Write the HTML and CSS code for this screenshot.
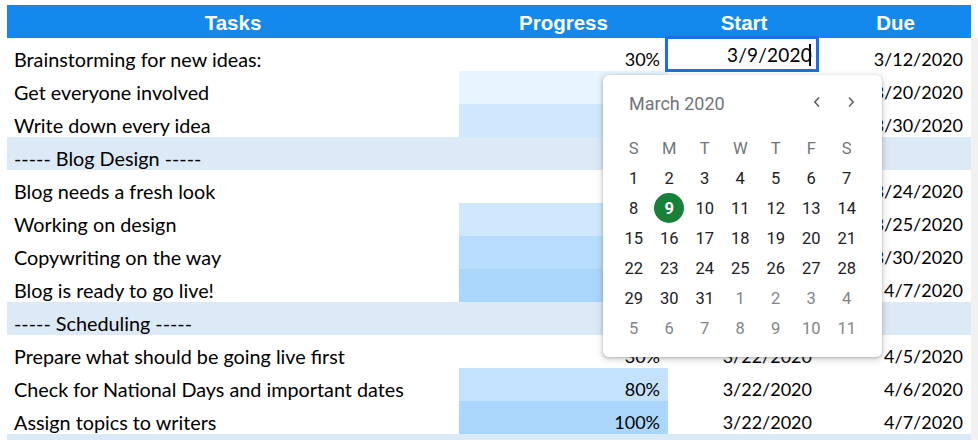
FILE: index.html
```html
<!DOCTYPE html>
<html>
<head>
<meta charset="utf-8">
<link rel="stylesheet" href="styles.css">
</head>
<body>
<div class="sheet">
  <div class="row head">
    <div class="c">Tasks</div>
    <div class="c">Progress</div>
    <div class="c">Start</div>
    <div class="c">Due</div>
  </div>
  <div class="row">
    <div class="c task">Brainstorming for new ideas:</div>
    <div class="c num">30%</div>
    <div class="c num">3/9/2020</div>
    <div class="c num">3/12/2020</div>
  </div>
  <div class="row">
    <div class="c task">Get everyone involved</div>
    <div class="c num p10">10%</div>
    <div class="c num">3/10/2020</div>
    <div class="c num">3/20/2020</div>
  </div>
  <div class="row">
    <div class="c task">Write down every idea</div>
    <div class="c num p40">40%</div>
    <div class="c num">3/12/2020</div>
    <div class="c num">3/30/2020</div>
  </div>
  <div class="row section">
    <div class="c task">----- Blog Design -----</div>
    <div class="c"></div><div class="c"></div><div class="c"></div>
  </div>
  <div class="row">
    <div class="c task">Blog needs a fresh look</div>
    <div class="c num">30%</div>
    <div class="c num">3/15/2020</div>
    <div class="c num">3/24/2020</div>
  </div>
  <div class="row">
    <div class="c task">Working on design</div>
    <div class="c num p40">40%</div>
    <div class="c num">3/16/2020</div>
    <div class="c num">3/25/2020</div>
  </div>
  <div class="row">
    <div class="c task">Copywriting on the way</div>
    <div class="c num p70">70%</div>
    <div class="c num">3/18/2020</div>
    <div class="c num">3/30/2020</div>
  </div>
  <div class="row">
    <div class="c task">Blog is ready to go live!</div>
    <div class="c num p100">100%</div>
    <div class="c num">3/20/2020</div>
    <div class="c num">4/7/2020</div>
  </div>
  <div class="row section">
    <div class="c task">----- Scheduling -----</div>
    <div class="c"></div><div class="c"></div><div class="c"></div>
  </div>
  <div class="row">
    <div class="c task">Prepare what should be going live first</div>
    <div class="c num">30%</div>
    <div class="c num">3/22/2020</div>
    <div class="c num">4/5/2020</div>
  </div>
  <div class="row">
    <div class="c task">Check for National Days and important dates</div>
    <div class="c num p80">80%</div>
    <div class="c num">3/22/2020</div>
    <div class="c num">4/6/2020</div>
  </div>
  <div class="row">
    <div class="c task">Assign topics to writers</div>
    <div class="c num p100">100%</div>
    <div class="c num">3/22/2020</div>
    <div class="c num">4/7/2020</div>
  </div>
  <div class="row section last">
    <div class="c task"></div>
    <div class="c"></div><div class="c"></div><div class="c"></div>
  </div>

  <div class="editor"><span class="edit-text">3/9/2020</span><span class="caret"></span></div>

  <div class="picker">
    <div class="picker-head">
      <span class="month">March 2020</span>
      <span class="navs">
        <svg width="10" height="12" viewBox="0 0 10 12"><path d="M7 1.5 L2.8 6 L7 10.5" fill="none" stroke="#5f6368" stroke-width="1.6"/></svg>
        <svg width="10" height="12" viewBox="0 0 10 12"><path d="M3 1.5 L7.2 6 L3 10.5" fill="none" stroke="#5f6368" stroke-width="1.6"/></svg>
      </span>
    </div>
    <div class="cal">
      <span class="wd">S</span><span class="wd">M</span><span class="wd">T</span><span class="wd">W</span><span class="wd">T</span><span class="wd">F</span><span class="wd">S</span>
      <span>1</span><span>2</span><span>3</span><span>4</span><span>5</span><span>6</span><span>7</span>
      <span>8</span><span class="sel">9</span><span>10</span><span>11</span><span>12</span><span>13</span><span>14</span>
      <span>15</span><span>16</span><span>17</span><span>18</span><span>19</span><span>20</span><span>21</span>
      <span>22</span><span>23</span><span>24</span><span>25</span><span>26</span><span>27</span><span>28</span>
      <span>29</span><span>30</span><span>31</span><span class="out">1</span><span class="out">2</span><span class="out">3</span><span class="out">4</span>
      <span class="out">5</span><span class="out">6</span><span class="out">7</span><span class="out">8</span><span class="out">9</span><span class="out">10</span><span class="out">11</span>
    </div>
  </div>
</div>
</body>
</html>
```

FILE: styles.css
```css
* { box-sizing: border-box; }
html, body { margin: 0; padding: 0; background: #ffffff; }
body { width: 978px; height: 440px; overflow: hidden; }

.sheet {
  position: relative;
  margin: 5px 0 0 7px;
  width: 971px;
  font-family: Lato, "Open Sans", sans-serif;
  font-size: 18px;
  color: #000;
}

.row {
  display: grid;
  grid-template-columns: 452px 209px 152px 151px;
  height: 33px;
  border-right: 7px solid #f1f1f1;
}
.row.last { height: 6px; }

.c {
  display: flex;
  align-items: flex-end;
  padding: 0 8px 0 7px;
  white-space: nowrap;
  overflow: hidden;
}
.task { font-size: 19.8px; }
.num { justify-content: flex-end; padding-bottom: 1px; }

.head {
  background: #1389ee;
  border-right: 7px solid #ffffff;
}
.head .c {
  justify-content: center;
  align-items: center;
  padding: 0;
  color: #fff;
  font-family: "Liberation Sans", Arial, sans-serif;
  font-weight: bold;
  font-size: 20.5px;
  padding-top: 2px;
}

.section { background: #dce9f6; }

.p10 { background: #e8f4fe; }
.p40 { background: #d0e8fd; }
.p70 { background: #b9ddfc; }
.p80 { background: #c4e2fd; }
.p100 { background: #abd6fc; }

.editor {
  position: absolute;
  left: 658px;
  top: 31px;
  width: 154px;
  height: 36px;
  border: 3px solid #1a6fe6;
  background: #fff;
  display: flex;
  align-items: center;
  justify-content: flex-end;
  padding-right: 5px;
  font-size: 19px;
}
.edit-text { letter-spacing: 0.2px; }
.caret {
  display: inline-block;
  width: 2px;
  height: 22px;
  background: #000;
  margin-left: -3px;
  margin-top: 2px;
}

.picker {
  position: absolute;
  left: 596px;
  top: 70px;
  width: 279px;
  height: 282px;
  background: #fff;
  border-radius: 6px;
  box-shadow: 0 1px 3px rgba(60,64,67,0.3), 0 2px 6px 2px rgba(60,64,67,0.15);
  font-family: Roboto, "Noto Sans", sans-serif;
  color: #202124;
}
.picker-head {
  display: flex;
  align-items: center;
  justify-content: space-between;
  padding: 16px 26px 0 26px;
  height: 40px;
}
.month {
  font-size: 18px;
  color: #70757a;
}
.navs { display: flex; gap: 24px; margin-top: -2px; }

.cal {
  display: grid;
  grid-template-columns: repeat(7, 35.5px);
  grid-auto-rows: 30px;
  margin: 18px 0 0 13px;
  font-size: 16.5px;
}
.cal span {
  display: flex;
  align-items: center;
  justify-content: center;
}
.cal .wd { color: #70757a; }
.cal .out { color: #80868b; }
.cal .sel {
  width: 30px;
  height: 30px;
  justify-self: center;
  border-radius: 50%;
  background: #188038;
  color: #fff;
  font-weight: bold;
}
```
